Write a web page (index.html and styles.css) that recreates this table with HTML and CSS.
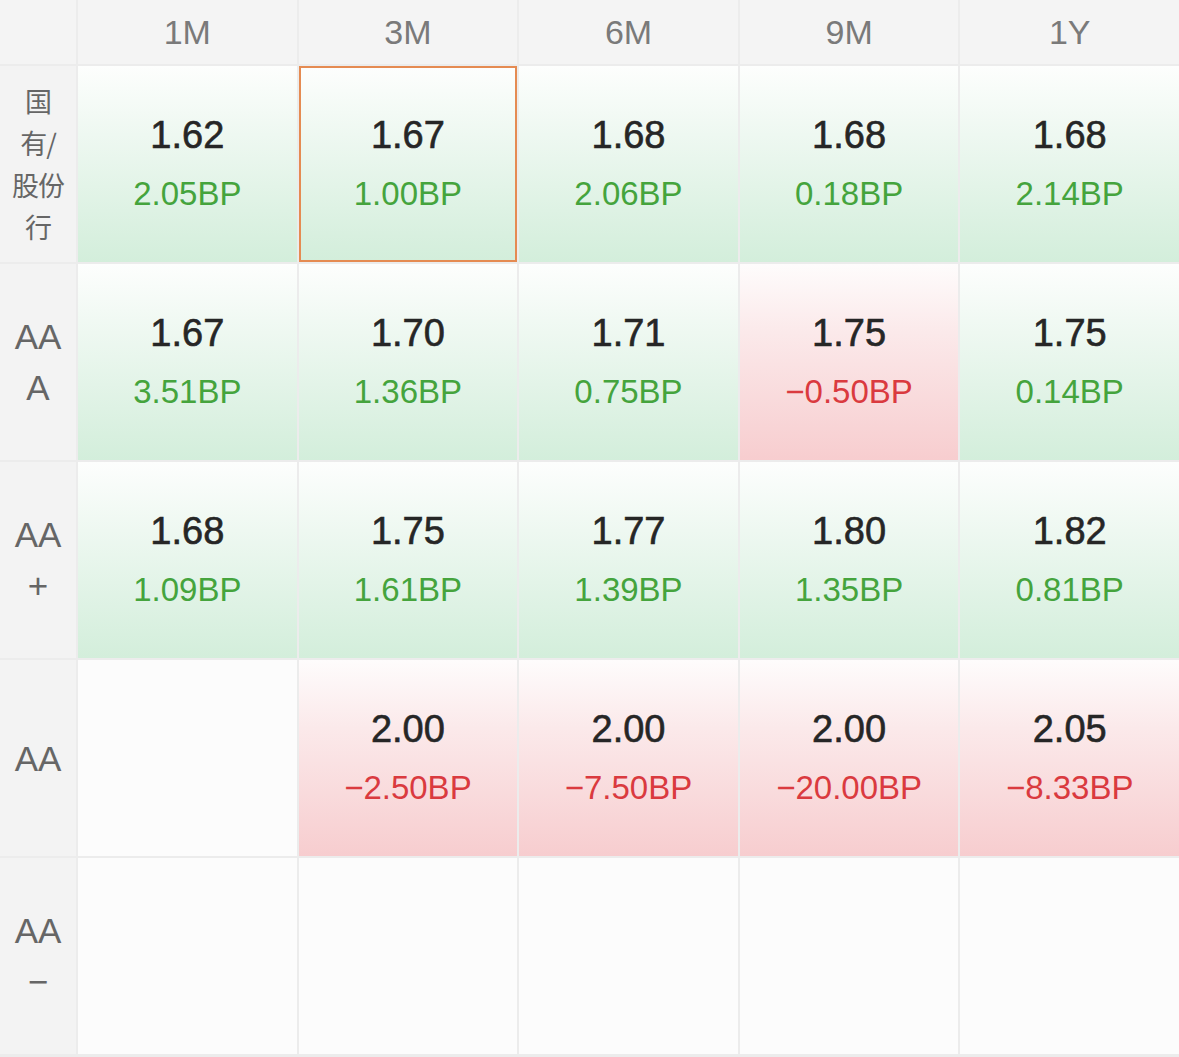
FILE: index.html
```html
<!DOCTYPE html>
<html lang="zh">
<head>
<meta charset="utf-8">
<link rel="stylesheet" href="styles.css">
<title>Rates</title>
</head>
<body>
<div class="grid">
  <div class="head corner"></div>
  <div class="head">1M</div>
  <div class="head">3M</div>
  <div class="head">6M</div>
  <div class="head">9M</div>
  <div class="head">1Y</div>

  <div class="label cn">国<br>有/<br>股份<br>行</div>
  <div class="cell up"><span class="val">1.62</span><span class="bp">2.05BP</span></div>
  <div class="cell up selected"><span class="val">1.67</span><span class="bp">1.00BP</span></div>
  <div class="cell up"><span class="val">1.68</span><span class="bp">2.06BP</span></div>
  <div class="cell up"><span class="val">1.68</span><span class="bp">0.18BP</span></div>
  <div class="cell up"><span class="val">1.68</span><span class="bp">2.14BP</span></div>

  <div class="label">AA<br>A</div>
  <div class="cell up"><span class="val">1.67</span><span class="bp">3.51BP</span></div>
  <div class="cell up"><span class="val">1.70</span><span class="bp">1.36BP</span></div>
  <div class="cell up"><span class="val">1.71</span><span class="bp">0.75BP</span></div>
  <div class="cell down"><span class="val">1.75</span><span class="bp">−0.50BP</span></div>
  <div class="cell up"><span class="val">1.75</span><span class="bp">0.14BP</span></div>

  <div class="label">AA<br>+</div>
  <div class="cell up"><span class="val">1.68</span><span class="bp">1.09BP</span></div>
  <div class="cell up"><span class="val">1.75</span><span class="bp">1.61BP</span></div>
  <div class="cell up"><span class="val">1.77</span><span class="bp">1.39BP</span></div>
  <div class="cell up"><span class="val">1.80</span><span class="bp">1.35BP</span></div>
  <div class="cell up"><span class="val">1.82</span><span class="bp">0.81BP</span></div>

  <div class="label">AA</div>
  <div class="cell empty"></div>
  <div class="cell down"><span class="val">2.00</span><span class="bp">−2.50BP</span></div>
  <div class="cell down"><span class="val">2.00</span><span class="bp">−7.50BP</span></div>
  <div class="cell down"><span class="val">2.00</span><span class="bp">−20.00BP</span></div>
  <div class="cell down"><span class="val">2.05</span><span class="bp">−8.33BP</span></div>

  <div class="label">AA<br>−</div>
  <div class="cell empty"></div>
  <div class="cell empty"></div>
  <div class="cell empty"></div>
  <div class="cell empty"></div>
  <div class="cell empty"></div>
</div>
</body>
</html>
```

FILE: styles.css
```css
html, body {
  margin: 0;
  padding: 0;
  background: #ececec;
}

body {
  width: 1179px;
  height: 1057px;
  overflow: hidden;
  font-family: "Liberation Sans", Arial, "Noto Sans CJK SC", sans-serif;
}

.grid {
  display: grid;
  grid-template-columns: 76px repeat(5, 1fr);
  grid-template-rows: 64px repeat(5, 196px);
  gap: 2px;
  background: #ececec;
  padding-bottom: 3px;
}

.head {
  background: #f4f4f4;
  color: #7a7a7a;
  font-size: 34px;
  display: flex;
  align-items: center;
  justify-content: center;
}

.label {
  background: #f3f3f3;
  color: #666;
  font-size: 35px;
  line-height: 51px;
  text-align: center;
  display: flex;
  align-items: center;
  justify-content: center;
}

.label.cn {
  font-family: "Noto Sans CJK SC", sans-serif;
  font-size: 27px;
  line-height: 42px;
  letter-spacing: -1px;
}

.cell {
  display: flex;
  flex-direction: column;
  align-items: center;
  justify-content: center;
  gap: 18px;
  box-sizing: border-box;
}

.cell.up {
  background: linear-gradient(to bottom, #fdfefd 0%, #eef8f1 35%, #d3eedb 100%);
}

.cell.down {
  background: linear-gradient(to bottom, #fefcfc 0%, #fbe9ea 35%, #f7cdcf 100%);
}

.cell.empty {
  background: #fcfcfc;
}

.cell.selected {
  border: 2px solid #e58b52;
}

.val {
  font-size: 38px;
  line-height: 42px;
  color: #262626;
  -webkit-text-stroke: 0.6px #262626;
}

.up .bp {
  color: #45a43d;
}

.down .bp {
  color: #da3a3f;
}

.bp {
  font-size: 33px;
  line-height: 40px;
}
```
